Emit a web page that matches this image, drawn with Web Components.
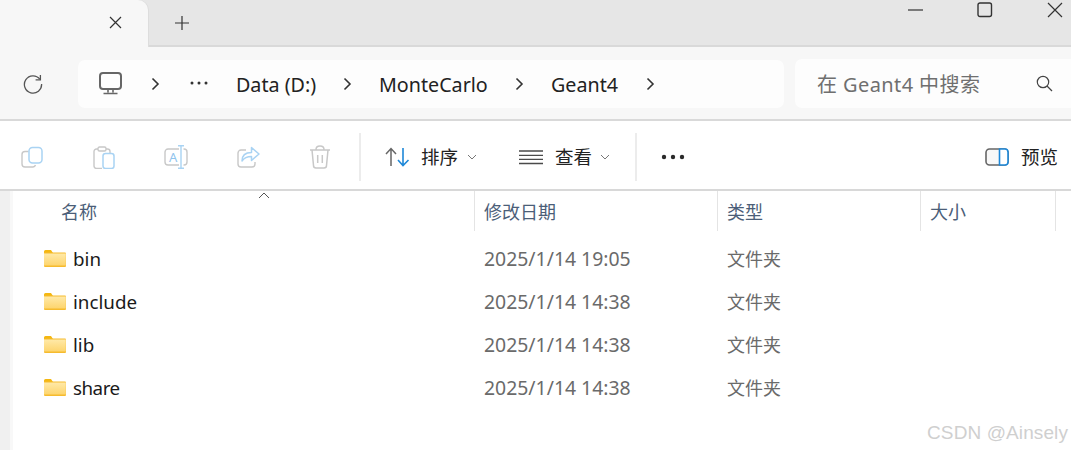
<!DOCTYPE html>
<html>
<head>
  <style>
    html, body { margin: 0; padding: 0; background: #fff; }
    body { width: 1071px; height: 450px; overflow: hidden; font-family: "Noto Sans", "Noto Sans CJK SC", sans-serif; }
  </style>
</head>
<body>
  <fx-window>
    <fx-tabstrip></fx-tabstrip>
    <fx-addressbar>
      <fx-crumb style="margin-left:27px;width:81px">Data (D:)</fx-crumb>
      <fx-icon name="chevron" style="margin-left:24px"></fx-icon>
      <fx-crumb style="margin-left:26px;width:109px">MonteCarlo</fx-crumb>
      <fx-icon name="chevron" style="margin-left:25px"></fx-icon>
      <fx-crumb style="margin-left:26px;width:66px">Geant4</fx-crumb>
      <fx-icon name="chevron" style="margin-left:27px"></fx-icon>
    </fx-addressbar>
    <fx-toolbar></fx-toolbar>
    <fx-filelist>
      <fx-row name="bin" date="2025/1/14 19:05" type="文件夹"></fx-row>
      <fx-row name="include" date="2025/1/14 14:38" type="文件夹"></fx-row>
      <fx-row name="lib" date="2025/1/14 14:38" type="文件夹"></fx-row>
      <fx-row name="share" date="2025/1/14 14:38" type="文件夹" style="--name-ls:-.5px"></fx-row>
    </fx-filelist>
  </fx-window>
  <script>
    const GREY = '#c8c8c8';
    const BLUE = '#a9d3f3';
    const ICONS = {
      tabclose: [13, 13, `<path d="M1 1l11 11M12 1L1 12" stroke="#333" stroke-width="1.2" fill="none"/>`],
      plus: [16, 16, `<path d="M8 1v14M1 8h14" stroke="#333" stroke-width="1.2" fill="none"/>`],
      minimize: [16, 2, `<path d="M0 1h15" stroke="#333" stroke-width="1.2" fill="none"/>`],
      maximize: [16, 16, `<rect x="1" y="1" width="13.5" height="13.5" rx="2" stroke="#333" stroke-width="1.4" fill="none"/>`],
      close: [16, 16, `<path d="M1 1l14 14M15 1L1 15" stroke="#333" stroke-width="1.2" fill="none"/>`],
      refresh: [20, 20, `<path d="M16.8 5.2A8.6 8.6 0 1 0 18.6 10" stroke="#555" stroke-width="1.3" fill="none"/><path d="M17.4 1v4.8h-4.8" stroke="#555" stroke-width="1.3" fill="none"/>`],
      monitor: [23, 23, `<rect x="1" y="1" width="21" height="16" rx="3" stroke="#666" stroke-width="2" fill="none"/><path d="M9 17.5v3M14 17.5v3M4.5 21.5h14" stroke="#666" stroke-width="1.6" fill="none"/>`],
      chevron: [12, 14, `<path d="M3.5 1.5L9 7l-5.500 5.500" stroke="#333" stroke-width="1.6" fill="none"/>`],
      ellipsis: [20, 6, `<circle cx="3" cy="3" r="1.500" fill="#333"/><circle cx="10" cy="3" r="1.500" fill="#333"/><circle cx="17" cy="3" r="1.500" fill="#333"/>`],
      search: [17, 17, `<circle cx="7" cy="7" r="5.700" stroke="#444" stroke-width="1.200" fill="none"/><path d="M11 11l5 5" stroke="#444" stroke-width="1.300" fill="none"/>`],
      copy: [22, 22, `<path d="M7.500 5.500H4A3 3 0 0 0 1 8.500V18a3 3 0 0 0 3 3h8a3 3 0 0 0 2.500-2" stroke="${GREY}" stroke-width="1.400" fill="none"/><rect x="8" y="1.500" width="13" height="15.500" rx="3.500" stroke="${BLUE}" stroke-width="1.500" fill="#fff"/>`],
      paste: [22, 23, `<path d="M5 3H3.500A2.500 2.500 0 0 0 1 5.500V20a2.500 2.500 0 0 0 2.500 2.500H9M13 3h1.500A2.500 2.500 0 0 1 17 5.500V7" stroke="${GREY}" stroke-width="1.400" fill="none"/><rect x="5" y="1" width="8" height="4" rx="1.500" stroke="${GREY}" stroke-width="1.400" fill="none"/><rect x="10" y="7.500" width="11" height="15" rx="2.500" stroke="${BLUE}" stroke-width="1.500" fill="#fff"/>`],
      rename: [24, 24, `<path d="M15 4H4a3 3 0 0 0-3 3v10a3 3 0 0 0 3 3h11M19.500 4H20a3 3 0 0 1 3 3v10a3 3 0 0 1-3 3h-.5" stroke="${GREY}" stroke-width="1.400" fill="none"/><path d="M17 .8v22.400M14 .8h6M14 23.200h6" stroke="${BLUE}" stroke-width="1.400" fill="none"/><text x="5" y="16.500" font-size="13" fill="#8fc4ee" font-family="Noto Sans, sans-serif">A</text>`],
      share: [23, 22, `<path d="M9 4H4a3 3 0 0 0-3 3v11a3 3 0 0 0 3 3h11a3 3 0 0 0 3-3v-2" stroke="${GREY}" stroke-width="1.400" fill="none"/><path d="M5 15c0-5 3-8.500 9.500-8.500V1.500L22 8l-7.500 6.500V10.500C10 10.500 7 12 5 15z" stroke="${BLUE}" stroke-width="1.500" stroke-linejoin="round" fill="none"/>`],
      trash: [22, 24, `<path d="M1 5h20M7 4.500C7 2 8.500 1 11 1s4 1 4 3.500M3 5l1.500 15.500A2.500 2.500 0 0 0 7 23h8a2.500 2.500 0 0 0 2.500-2.500L19 5M8.700 10v8M13.300 10v8" stroke="${GREY}" stroke-width="1.500" fill="none"/>`],
      sort: [25, 20, `<path d="M6 19V2M1 7l5-5.500L11 7" stroke="#666" stroke-width="1.500" fill="none"/><path d="M18 1v17M13 13l5 5.500L23.500 13" stroke="#1e88d8" stroke-width="1.600" fill="none"/>`],
      caret: [10, 6, `<path d="M1 1l4 4 4-4" stroke="#777" stroke-width="1" fill="none"/>`],
      list: [24, 16, `<path d="M0 2h24M0 6.300h24M0 10.400h24M0 14.500h24" stroke="#4a4a4a" stroke-width="1.300" fill="none"/>`],
      dots: [24, 6, `<circle cx="3" cy="3" r="2.200" fill="#2a2a2a"/><circle cx="12" cy="3" r="2.200" fill="#2a2a2a"/><circle cx="21" cy="3" r="2.200" fill="#2a2a2a"/>`],
      preview: [24, 18, `<rect x="1" y="1" width="22" height="16" rx="3.500" stroke="#666" stroke-width="1.600" fill="#f8f8f8"/><path d="M14.500 1H20a3 3 0 0 1 3 3v10a3 3 0 0 1-3 3h-5.500z" stroke="#1e88d8" stroke-width="1.600" fill="#fff"/>`],
      folder: [22, 17, `<defs><linearGradient id="f" x1="0" y1="0" x2="0" y2="1"><stop offset="0" stop-color="#ffe9a8"/><stop offset="1" stop-color="#fdd56e"/></linearGradient></defs><path d="M0 1.500A1.500 1.500 0 0 1 1.500 0H7l2 3H0z" fill="#f4b711"/><rect x="0" y="2.500" width="22" height="14.500" rx="1" fill="#f6bb2e"/><path d="M0 3.500h21.800V15.500H0z" fill="url(#f)"/>`],
      sortup: [12, 7, `<path d="M1 6l5-5 5 5" stroke="#555" stroke-width="1" fill="none"/>`]
    };

    class FxIcon extends HTMLElement {
      connectedCallback() {
        if (this.shadowRoot) return;
        this.attachShadow({ mode: 'open' });
        let [w, h, body] = ICONS[this.getAttribute('name')];
        this.shadowRoot.innerHTML = `
          <style>:host { display: block; flex: none; width: ${w}px; height: ${h}px; line-height: 0; } svg { display: block; }</style>
          <svg width="${w}" height="${h}" viewBox="0 0 ${w} ${h}">${body}</svg>`;
      }
    }
    customElements.define('fx-icon', FxIcon);

    class FxWindow extends HTMLElement {
      constructor() {
        super();
        this.attachShadow({ mode: 'open' });
        this.shadowRoot.innerHTML = `
          <style>
            :host { display: flex; flex-direction: column; position: relative; width: 1071px; height: 450px; overflow: hidden; background: #fff; }
            .mark { position: absolute; right: 3px; bottom: 6px; font: 19px "Liberation Sans", sans-serif; color: #cfcfcf; letter-spacing: .1px; }
          </style>
          <slot></slot>
          <div class="mark">CSDN @Ainsely</div>`;
      }
    }
    customElements.define('fx-window', FxWindow);

    class FxTabstrip extends HTMLElement {
      constructor() {
        super();
        this.attachShadow({ mode: 'open' });
        this.shadowRoot.innerHTML = `
          <style>
            :host { display: flex; flex: none; height: 45px; background: #e6e6e6; border-bottom: 2px solid #d9d9d9; position: relative; }
            .tab { width: 148px; height: 47px; margin-bottom: -2px; background: #f7f7f7; border-radius: 0 10px 0 0; box-shadow: 1px 0 0 #ddd; display: flex; justify-content: flex-end; padding: 16px 26px 0 0; box-sizing: border-box; }
            .plus { margin: 15px 0 0 26px; }
            .controls { margin-left: auto; display: flex; align-items: flex-start; }
            .min { margin: 9px 53px 0 0; }
            .max { margin: 2px 54px 0 0; }
            .cls { margin: 2px 8px 0 0; }
          </style>
          <div class="tab"><fx-icon name="tabclose"></fx-icon></div>
          <fx-icon class="plus" name="plus"></fx-icon>
          <div class="controls">
            <fx-icon class="min" name="minimize"></fx-icon>
            <fx-icon class="max" name="maximize"></fx-icon>
            <fx-icon class="cls" name="close"></fx-icon>
          </div>`;
      }
    }
    customElements.define('fx-tabstrip', FxTabstrip);

    class FxCrumb extends HTMLElement {
      constructor() {
        super();
        this.attachShadow({ mode: 'open' });
        this.shadowRoot.innerHTML = `
          <style>:host { display: block; flex: none; white-space: nowrap; font-size: 19.700px; color: #222; }</style>
          <slot></slot>`;
      }
    }
    customElements.define('fx-crumb', FxCrumb);

    class FxAddressbar extends HTMLElement {
      constructor() {
        super();
        this.attachShadow({ mode: 'open' });
        this.shadowRoot.innerHTML = `
          <style>
            :host { display: flex; flex: none; box-sizing: border-box; background: #f7f7f7; border-bottom: 2px solid #d9d9d9; height: 74px; padding: 13px 0 11px 0; }
            .refresh { margin: 14px 0 0 23px; }
            .path { display: flex; align-items: center; width: 706px; margin-left: 35px; background: #fdfdfd; border-radius: 7px; box-sizing: border-box; padding-left: 21px; }
            .path .pc { margin-bottom: 2px; }
            .path .c1 { margin-left: 27px; }
            .path .dots { margin: 0 0 3px 28px; }
            .search { display: flex; align-items: center; flex: 1; margin: -1px 0 0 11px; background: #fdfdfd; border-radius: 7px 0 0 7px; padding-left: 22px; box-sizing: border-box; font-size: 20px; letter-spacing: .4px; color: #6f6f6f; white-space: nowrap; }
            .search fx-icon { margin-left: auto; margin-right: 18px; }
          </style>
          <fx-icon class="refresh" name="refresh"></fx-icon>
          <div class="path">
            <fx-icon class="pc" name="monitor"></fx-icon>
            <fx-icon class="c1" name="chevron"></fx-icon>
            <fx-icon class="dots" name="ellipsis"></fx-icon>
            <slot></slot>
          </div>
          <div class="search"><span>在 Geant4 中搜索</span><fx-icon name="search"></fx-icon></div>`;
      }
    }
    customElements.define('fx-addressbar', FxAddressbar);

    class FxToolbar extends HTMLElement {
      constructor() {
        super();
        this.attachShadow({ mode: 'open' });
        this.shadowRoot.innerHTML = `
          <style>
            :host { display: flex; align-items: center; flex: none; box-sizing: border-box; height: 70px; padding-top: 4px; background: #fff; border-bottom: 2px solid #d8d8d8; font-size: 18.500px; color: #222; white-space: nowrap; }
            .sep { width: 2px; height: 48px; background: #ececec; flex: none; }
            .group { display: flex; align-items: center; flex: none; }
            .muted { padding-left: 21px; width: 359px; box-sizing: border-box; }
            .muted fx-icon { margin-right: 50px; }
            span { display: block; line-height: 24px; }
          </style>
          <div class="group muted">
            <fx-icon name="copy"></fx-icon>
            <fx-icon name="paste"></fx-icon>
            <fx-icon name="rename" style="margin-left:-1px;margin-right:49px"></fx-icon>
            <fx-icon name="share" style="margin-right:49px"></fx-icon>
            <fx-icon name="trash" style="margin:0"></fx-icon>
          </div>
          <div class="sep" style="margin-left:0"></div>
          <div class="group" style="margin-left:24px">
            <fx-icon name="sort"></fx-icon><span style="margin-left:11px">排序</span><fx-icon name="caret" style="margin-left:9px"></fx-icon>
            <fx-icon name="list" style="margin-left:42px"></fx-icon><span style="margin-left:12px">查看</span><fx-icon name="caret" style="margin-left:8px"></fx-icon>
          </div>
          <div class="sep" style="margin-left:25px"></div>
          <fx-icon name="dots" style="margin-left:24px"></fx-icon>
          <div class="group" style="margin-left:auto;margin-right:13px">
            <fx-icon name="preview"></fx-icon><span style="margin-left:12px">预览</span>
          </div>`;
      }
    }
    customElements.define('fx-toolbar', FxToolbar);

    class FxFilelist extends HTMLElement {
      constructor() {
        super();
        this.attachShadow({ mode: 'open' });
        this.shadowRoot.innerHTML = `
          <style>
            :host { display: flex; flex: 1; min-height: 0; background: #fff; }
            .rail { flex: none; width: 10px; background: #f0f0f0; border-right: 3px solid #f8f8f8; }
            .main { flex: 1; min-width: 0; }
            .head { display: grid; grid-template-columns: 462px 243px 203px 135px; grid-template-rows: 40px; height: 40px; position: relative; font-size: 18px; color: #4b5e78; }
            .head div { border-right: 1px solid #e4e4e4; height: 40px; line-height: 42px; padding-left: 9px; box-sizing: border-box; white-space: nowrap; }
            .head div:first-child { padding-left: 48px; }
            .up { position: absolute; left: 245px; top: 1px; }
            .rows { padding-top: 6px; }
          </style>
          <div class="rail"></div>
          <div class="main">
            <div class="head">
              <div>名称</div><div>修改日期</div><div>类型</div><div>大小</div>
              <fx-icon class="up" name="sortup"></fx-icon>
            </div>
            <div class="rows"><slot></slot></div>
          </div>`;
      }
    }
    customElements.define('fx-filelist', FxFilelist);

    class FxRow extends HTMLElement {
      connectedCallback() {
        if (this.shadowRoot) return;
        this.attachShadow({ mode: 'open' });
        this.shadowRoot.innerHTML = `
          <style>
            :host { display: grid; grid-template-columns: 461px 243px 1fr; height: 43px; align-items: center; white-space: nowrap; }
            .name { display: flex; align-items: center; padding-left: 31px; font-size: 18.800px; letter-spacing: var(--name-ls, 0); color: #1a1a1a; }
            .name fx-icon { margin: -1px 7px 0 0; }
            .name span { padding-top: 1px; }
            .date, .type { padding-left: 10px; color: #6a6a6a; }
            .date { font-size: 19.400px; }
            .type { font-size: 18px; margin-top: -2px; }
          </style>
          <div class="name"><fx-icon name="folder"></fx-icon><span></span></div>
          <div class="date"></div>
          <div class="type"></div>`;
        this.shadowRoot.querySelector('.name span').textContent = this.getAttribute('name');
        this.shadowRoot.querySelector('.date').textContent = this.getAttribute('date');
        this.shadowRoot.querySelector('.type').textContent = this.getAttribute('type');
      }
    }
    customElements.define('fx-row', FxRow);
  </script>
</body>
</html>
